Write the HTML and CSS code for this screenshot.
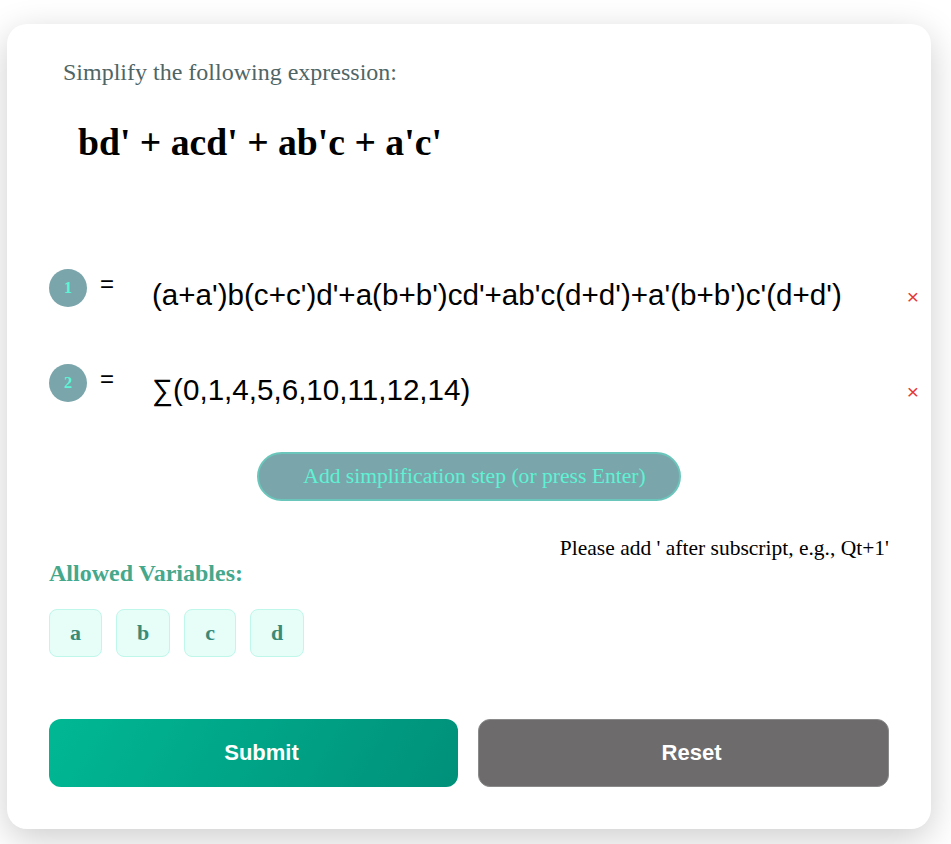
FILE: index.html
```html
<!DOCTYPE html>
<html>
<head>
<meta charset="utf-8">
<link rel="stylesheet" href="styles.css">
</head>
<body>
<div class="card">
  <p class="prompt">Simplify the following expression:</p>
  <h1 class="expr">bd' + acd' + ab'c + a'c'</h1>

  <div class="steps">
    <div class="step">
      <span class="badge">1</span>
      <span class="eq">=</span>
      <span class="step-text">(a+a')b(c+c')d'+a(b+b')cd'+ab'c(d+d')+a'(b+b')c'(d+d')</span>
      <span class="remove">×</span>
    </div>
    <div class="step">
      <span class="badge">2</span>
      <span class="eq">=</span>
      <span class="step-text">∑(0,1,4,5,6,10,11,12,14)</span>
      <span class="remove">×</span>
    </div>
  </div>

  <div class="add-wrap">
    <button class="add-btn">Add simplification step (or press Enter)</button>
  </div>

  <p class="hint">Please add ' after subscript, e.g., Qt+1'</p>

  <h3 class="vars-title">Allowed Variables:</h3>
  <div class="vars">
    <span class="chip">a</span>
    <span class="chip">b</span>
    <span class="chip">c</span>
    <span class="chip">d</span>
  </div>

  <div class="actions">
    <button class="btn submit">Submit</button>
    <button class="btn reset">Reset</button>
  </div>
</div>
</body>
</html>
```

FILE: styles.css
```css
html, body {
  margin: 0;
  padding: 0;
  background: #ffffff;
}

body {
  font-family: "Liberation Serif", "Times New Roman", serif;
  padding: 24px 20px 15px 7px;
}

.card {
  width: 924px;
  box-sizing: border-box;
  background: #ffffff;
  border-radius: 20px;
  box-shadow: 0 10px 36px rgba(0, 0, 0, 0.2);
  padding: 34px 42px 42px 42px;
}

.prompt {
  margin: 0 0 0 14px;
  font-size: 24px;
  line-height: 28px;
  color: #4f6566;
}

.expr {
  margin: 34px 0 0 29px;
  font-size: 37.7px;
  line-height: 44px;
  font-weight: bold;
  color: #000;
}

.steps {
  margin-top: 105px;
  display: flex;
  flex-direction: column;
  gap: 57px;
  margin-right: -32px;
}

.step {
  display: flex;
  align-items: flex-start;
  height: 38px;
}

.badge {
  width: 38px;
  height: 38px;
  border-radius: 50%;
  background: #7aa5ab;
  color: #5cf5d5;
  font-weight: bold;
  font-size: 16.5px;
  display: flex;
  align-items: center;
  justify-content: center;
  flex-shrink: 0;
}

.eq {
  font-family: "Liberation Sans", Arial, sans-serif;
  font-size: 24px;
  line-height: 30px;
  margin-left: 13px;
  margin-top: 0;
  width: 52px;
}

.step-text {
  font-family: "Liberation Sans", Arial, sans-serif;
  font-size: 29.6px;
  line-height: 34px;
  margin-top: 9px;
  flex: 1;
  color: #000;
}

.remove {
  font-family: "Liberation Sans", Arial, sans-serif;
  color: #e53935;
  font-size: 21px;
  line-height: 20px;
  margin-top: 18px;
  margin-right: 2px;
}

.add-wrap {
  display: flex;
  justify-content: center;
  margin-top: 50px;
}

.add-btn {
  font-family: "Liberation Serif", "Times New Roman", serif;
  font-size: 21.6px;
  color: #5ff2d4;
  background: #7aa5ab;
  border: 2px solid #6ac6bb;
  border-radius: 25px;
  height: 49px;
  padding: 0 33px 0 44px;
}

.hint {
  margin: 35px 0 0 0;
  text-align: right;
  font-size: 21.5px;
  line-height: 24px;
  color: #000;
}

.vars-title {
  margin: 0;
  font-size: 24px;
  line-height: 26px;
  color: #45a88c;
}

.vars {
  display: flex;
  gap: 14px;
  margin-top: 23px;
}

.chip {
  height: 48px;
  box-sizing: border-box;
  padding: 0 20px;
  display: flex;
  align-items: center;
  justify-content: center;
  background: #e6fdf8;
  border: 1.5px solid #bff7ea;
  border-radius: 8px;
  font-weight: bold;
  font-size: 22px;
  color: #3a8a78;
}

.actions {
  display: flex;
  gap: 20px;
  margin-top: 62px;
}

.btn {
  flex: 1;
  height: 68px;
  border-radius: 12px;
  font-family: "Liberation Sans", Arial, sans-serif;
  font-weight: bold;
  font-size: 22px;
  color: #ffffff;
  padding: 0 0 0 16px;
}

.submit {
  background: linear-gradient(120deg, #00b894 0%, #00907a 100%);
  border: none;
}

.reset {
  background: #6d6b6c;
  border: 1px solid #8a8a8a;
}
```
